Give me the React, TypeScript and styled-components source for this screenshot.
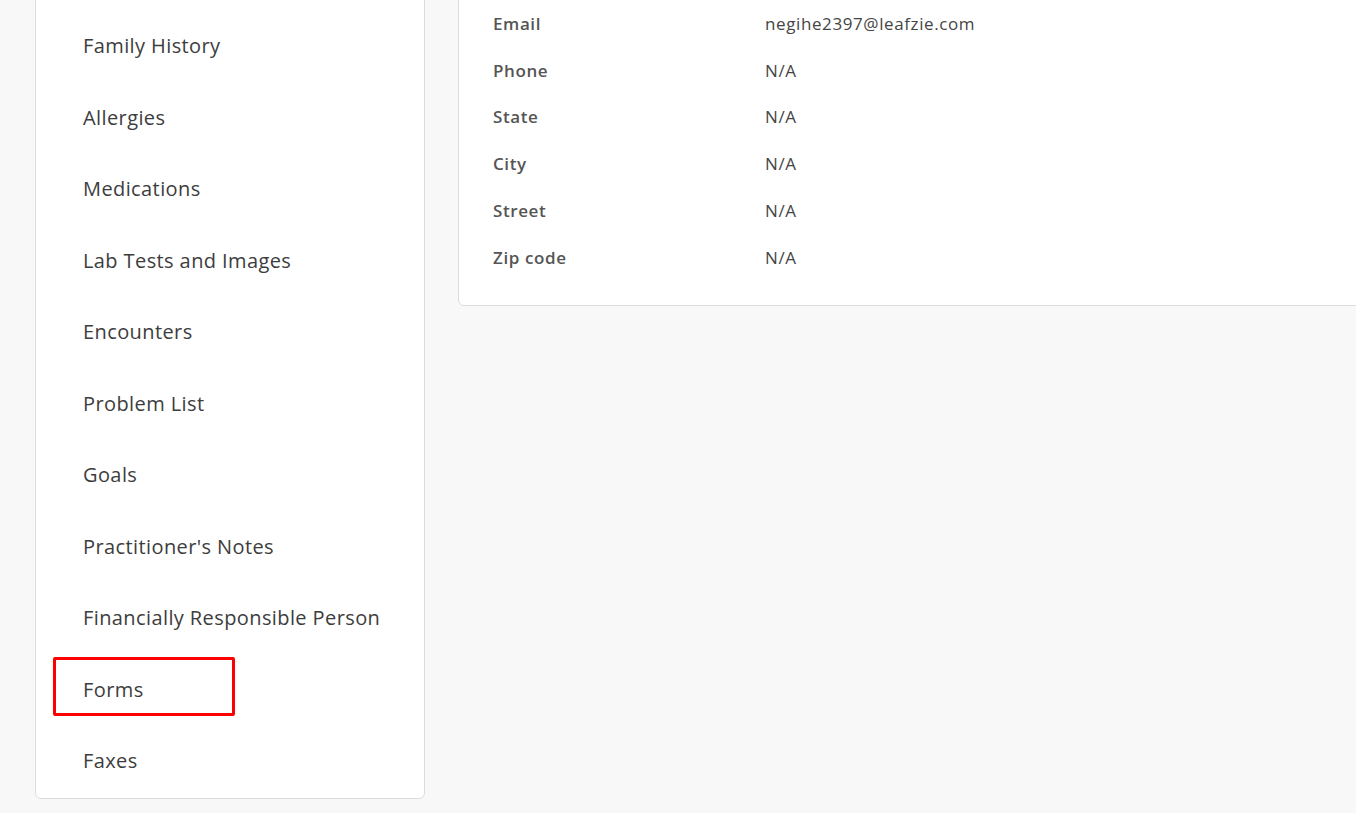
import styled, { createGlobalStyle } from 'styled-components'

const GlobalStyle = createGlobalStyle`
  html, body {
    margin: 0;
    padding: 0;
    background: #f8f8f8;
    overflow: hidden;
    font-family: 'Open Sans', Lato, sans-serif;
  }
`

const Page = styled.div`
  display: grid;
  grid-template-columns: 390px 1fr;
  column-gap: 33px;
  align-items: start;
  margin: -10px -20px 0 35px;
`

const Card = styled.div`
  background: #fff;
  border: 1px solid #dcdcdc;
  border-radius: 6px;
`

const Sidebar = styled(Card)`
  padding: 19px 0 1px;
`

const NavItem = styled.div<{ $marked?: boolean }>`
  position: relative;
  height: 71.5px;
  display: flex;
  align-items: center;
  padding-left: 47px;
  font-size: 20px;
  letter-spacing: 0.4px;
  color: #3d3d3d;
  cursor: pointer;

  ${(p) =>
    p.$marked &&
    `
    &::after {
      content: '';
      position: absolute;
      left: 17px;
      top: 3px;
      width: 176px;
      height: 53px;
      border: 3px solid #ff0000;
      border-radius: 2px;
    }
  `}
`

const Details = styled(Card)`
  padding: 9px 0 24px;
`

const Row = styled.div`
  display: grid;
  grid-template-columns: 272px 1fr;
  align-items: center;
  height: 46.8px;
  padding-left: 34px;
  font-size: 17px;
  letter-spacing: 0.6px;
`

const Label = styled.span`
  font-weight: 600;
  color: #555;
`

const Value = styled.span`
  color: #454545;
`

const navItems = [
  'Family History',
  'Allergies',
  'Medications',
  'Lab Tests and Images',
  'Encounters',
  'Problem List',
  'Goals',
  "Practitioner's Notes",
  'Financially Responsible Person',
  'Forms',
  'Faxes',
]

const details: [string, string][] = [
  ['Email', 'negihe2397@leafzie.com'],
  ['Phone', 'N/A'],
  ['State', 'N/A'],
  ['City', 'N/A'],
  ['Street', 'N/A'],
  ['Zip code', 'N/A'],
]

const App: React.FC = () => {
  return (
    <>
      <GlobalStyle />
      <Page>
        <Sidebar>
          {navItems.map((item) => (
            <NavItem key={item} $marked={item === 'Forms'}>
              {item}
            </NavItem>
          ))}
        </Sidebar>
        <Details>
          {details.map(([label, value]) => (
            <Row key={label}>
              <Label>{label}</Label>
              <Value>{value}</Value>
            </Row>
          ))}
        </Details>
      </Page>
    </>
  )
}

export default App
